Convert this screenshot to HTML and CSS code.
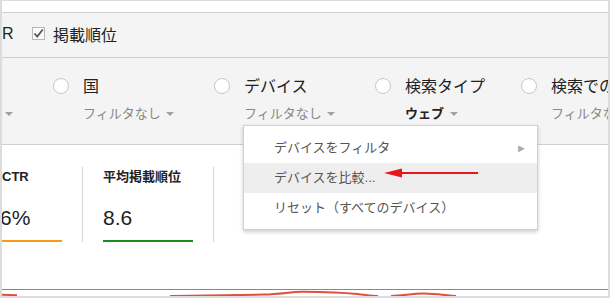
FILE: index.html
```html
<!DOCTYPE html>
<html lang="ja">
<head>
    <meta charset="UTF-8">
    <title>検索パフォーマンス</title>
    <link rel="stylesheet" href="styles.css">
</head>
<body>
    <div class="frame">
        <div class="top-strip"></div>

        <div class="legend">
            <span class="legend-cut">R</span>
            <span class="check">
                <svg width="11" height="11" viewBox="0 0 11 11"><path d="M1.5 5.5 L4.2 8.5 L9.8 1.5" fill="none" stroke="#555" stroke-width="1.8"/></svg>
            </span>
            <span class="legend-label">掲載順位</span>
        </div>

        <div class="dims">
            <div class="dim-cut"><span class="caret"></span></div>
            <div class="dim">
                <span class="radio"></span>
                <span class="dim-title">国</span>
                <span class="dim-sub">フィルタなし <span class="caret"></span></span>
            </div>
            <div class="dim">
                <span class="radio"></span>
                <span class="dim-title">デバイス</span>
                <span class="dim-sub">フィルタなし <span class="caret"></span></span>
            </div>
            <div class="dim">
                <span class="radio"></span>
                <span class="dim-title">検索タイプ</span>
                <span class="dim-sub strong">ウェブ <span class="caret"></span></span>
            </div>
            <div class="dim">
                <span class="radio"></span>
                <span class="dim-title">検索での見え方</span>
                <span class="dim-sub">フィルタなし <span class="caret"></span></span>
            </div>
        </div>

        <div class="metrics">
            <div class="metric first">
                <div class="metric-title">CTR</div>
                <div class="metric-value">6%</div>
                <div class="metric-bar orange"></div>
            </div>
            <div class="metric">
                <div class="metric-title">平均掲載順位</div>
                <div class="metric-value">8.6</div>
                <div class="metric-bar green"></div>
            </div>
        </div>

        <div class="chart">
            <svg width="606" height="7" viewBox="0 0 606 7">
                <line x1="0" y1="0.5" x2="606" y2="0.5" stroke="#888" stroke-width="1"/>
                <path d="M0 5.8 L15 6.2" fill="none" stroke="#e0503c" stroke-width="2"/>
                <path d="M168 7 C200 6.2 235 6 262 5.6 C280 5 290 2.6 301 2.8 C320 3 340 3.6 355 5 C365 6 370 6.8 376 7" fill="none" stroke="#e0503c" stroke-width="2"/>
                <path d="M389 7 C402 6.4 412 4.4 422 4.6 C434 4.8 444 6.4 454 7" fill="none" stroke="#e0503c" stroke-width="2"/>
            </svg>
        </div>

        <div class="menu">
            <div class="menu-item">デバイスをフィルタ <span class="submenu-arrow">&#9658;</span></div>
            <div class="menu-item hover">デバイスを比較...</div>
            <div class="menu-item">リセット（すべてのデバイス）</div>
        </div>

        <svg class="pointer" width="96" height="12" viewBox="0 0 96 12">
            <line x1="14" y1="6" x2="94" y2="6" stroke="#e8141a" stroke-width="2"/>
            <path d="M0 6 L18 1.5 L18 10.5 Z" fill="#e8141a"/>
        </svg>
    </div>
</body>
</html>
```

FILE: styles.css
```css
body {
    margin: 0;
    font-family: "Liberation Sans", "Noto Sans CJK JP", sans-serif;
    color: #222;
}
.frame {
    position: relative;
    width: 610px;
    height: 298px;
    box-sizing: border-box;
    border: 2px solid #dcdcdc;
    border-top-width: 1px;
    background: #fff;
    overflow: hidden;
}
.top-strip {
    height: 11px;
    border-bottom: 1px solid #d0d0d0;
}
.legend {
    height: 45px;
    box-sizing: border-box;
    padding-bottom: 3px;
    display: flex;
    align-items: center;
    background: #f4f4f4;
    border-bottom: 1px solid #d0d0d0;
    font-size: 16px;
}
.legend-cut {
    width: 30px;
}
.check {
    width: 11px;
    height: 11px;
    border: 1px solid #b8b8b8;
    background: #fafafa;
    display: flex;
    margin-right: 8px;
}
.dims {
    height: 86px;
    display: grid;
    grid-template-columns: 51px 161px 161px 146px 1fr;
    background: #f4f4f4;
    border-bottom: 1px solid #d0d0d0;
    white-space: nowrap;
}
.dim-cut {
    padding: 46px 0 0 1px;
}
.dim {
    display: grid;
    grid-template-columns: 30px auto;
    grid-template-rows: 27px 28px;
    padding-top: 13px;
    align-items: center;
}
.radio {
    width: 14px;
    height: 14px;
    border: 1px solid #c8c8c8;
    border-radius: 50%;
    background: #fff;
    margin-top: 3px;
}
.dim-title {
    font-size: 16px;
    color: #222;
}
.dim-sub {
    grid-column: 2;
    font-size: 13px;
    color: #888;
}
.dim-sub.strong {
    color: #222;
    font-weight: bold;
}
.caret {
    display: inline-block;
    width: 0;
    height: 0;
    border-left: 4px solid transparent;
    border-right: 4px solid transparent;
    border-top: 4px solid #a0a0a0;
    vertical-align: middle;
    margin-left: 2px;
}
.metrics {
    height: 144px;
    display: flex;
    align-items: flex-start;
    padding-top: 22px;
    box-sizing: border-box;
}
.metric {
    padding: 0 20px;
    border-right: 1px solid #d4d4d4;
    height: 75px;
    display: flex;
    flex-direction: column;
}
.metric.first {
    padding-left: 0;
}
.metric-title {
    font-size: 13px;
    font-weight: bold;
    height: 20px;
    line-height: 20px;
}
.metric-value {
    font-size: 21px;
    height: 26px;
    line-height: 26px;
    margin-top: 18px;
}
.metric-bar {
    height: 2px;
    margin-top: 9px;
}
.metric.first .metric-bar {
    width: 60px;
}
.metric.first .metric-value {
    margin-left: -2px;
}
.metric-bar.orange {
    background: #f39c12;
}
.metric-bar.green {
    background: #1a8c1a;
    width: 90px;
}
.chart {
    height: 7px;
}
.chart svg {
    display: block;
}
.menu {
    position: absolute;
    left: 241px;
    top: 124px;
    width: 293px;
    padding: 7px 0 6px;
    background: #fff;
    border: 1px solid #d0d0d0;
    box-shadow: 0 2px 4px rgba(0, 0, 0, 0.2);
}
.menu-item {
    height: 30px;
    line-height: 30px;
    padding-left: 30px;
    padding-right: 10px;
    font-size: 13px;
    color: #555;
    display: flex;
    justify-content: space-between;
}
.menu-item.hover {
    background: #eee;
}
.submenu-arrow {
    font-size: 11px;
    color: #aaa;
}
.pointer {
    position: absolute;
    left: 382px;
    top: 166px;
}
```
